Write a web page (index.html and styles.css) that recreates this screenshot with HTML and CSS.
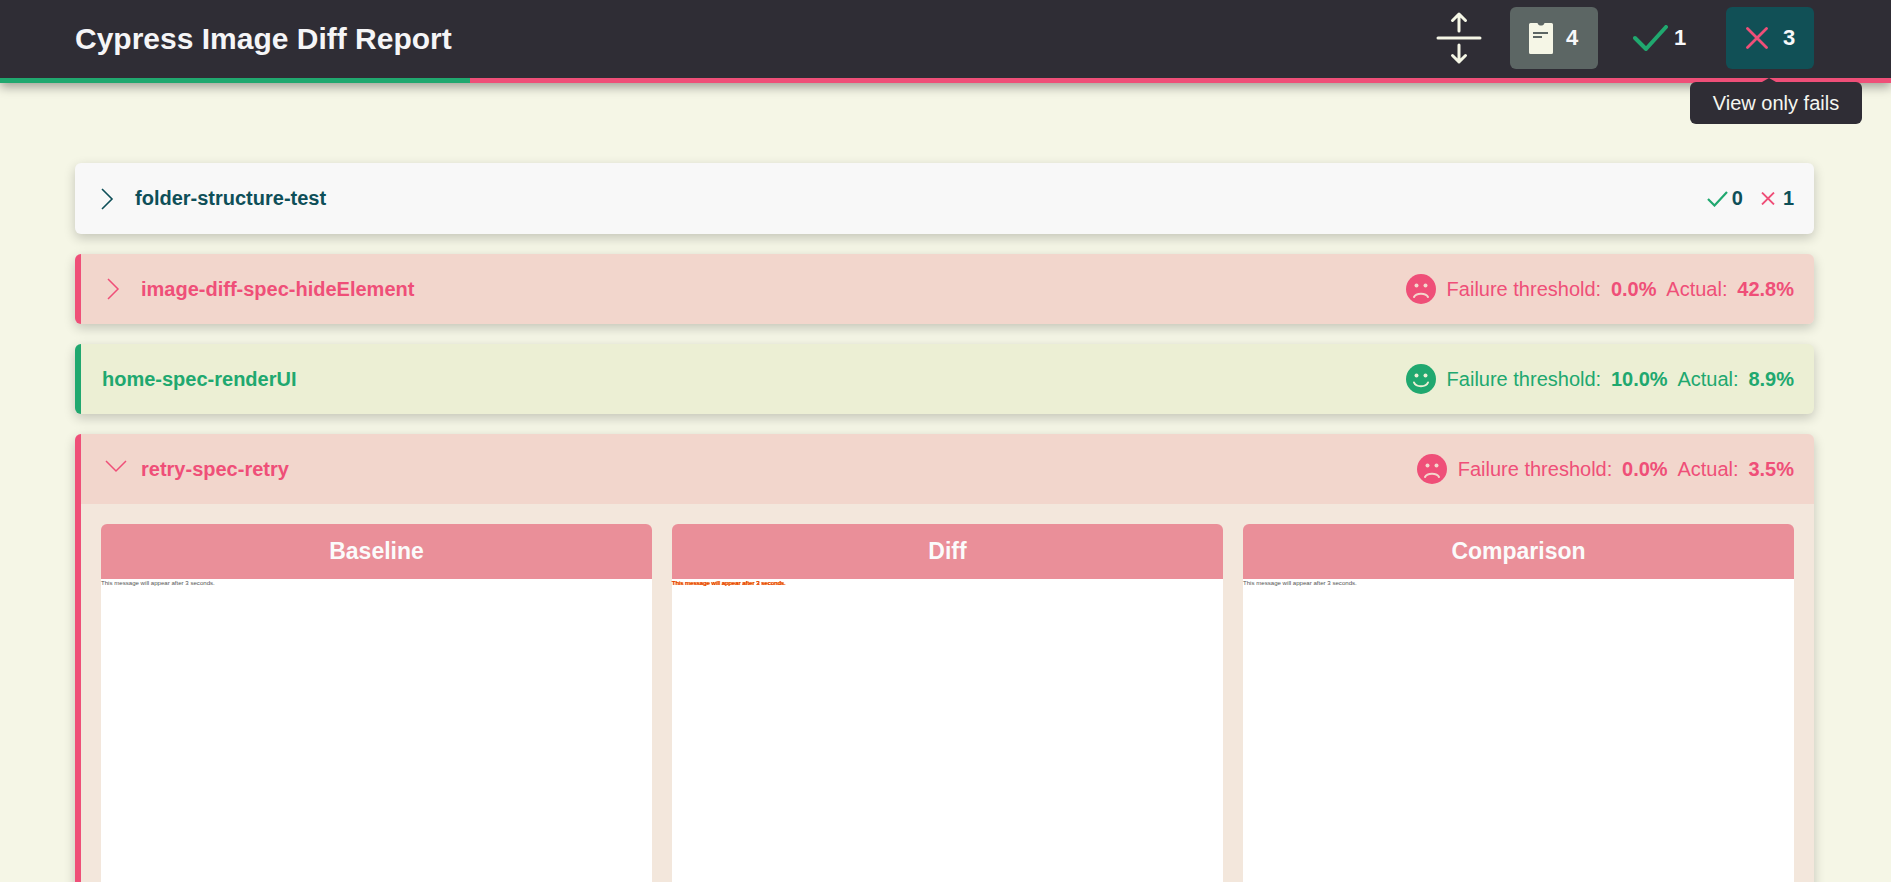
FILE: index.html
```html
<!DOCTYPE html>
<html lang="en">
<head>
<meta charset="utf-8">
<title>Cypress Image Diff Report</title>
<link rel="stylesheet" href="styles.css">
</head>
<body>
<div class="page">
  <header class="topbar">
    <div class="topbar-main">
      <h1 class="title">Cypress Image Diff Report</h1>
      <div class="actions">
        <button class="btn-toggle" type="button" aria-label="Toggle">
          <svg width="62" height="62" viewBox="0 0 62 62" fill="none" stroke="#f5f6e6" stroke-width="3" stroke-linecap="round" stroke-linejoin="round">
            <path d="M10 31H52"/>
            <path d="M31 7V24M24.500 13.500L31 7L37.500 13.500"/>
            <path d="M31 38V55M24.500 48.500L31 55L37.500 48.500"/>
          </svg>
        </button>
        <button class="btn btn-all" type="button">
          <svg width="24" height="31" viewBox="0 0 24 31"><path fill="#f5f6e6" d="M1.500 0H8.500C9 2 10.500 2.500 12 2.500S15 2 15.500 0H22.500A1.500 1.500 0 0 1 24 1.500V29.500A1.500 1.500 0 0 1 22.500 31H1.500A1.500 1.500 0 0 1 0 29.500V1.500A1.500 1.500 0 0 1 1.500 0Z"/><path d="M4 10H19M4 14H13" stroke="#5c6664" stroke-width="1.800"/></svg>
          <span class="btn-count">4</span>
        </button>
        <button class="btn btn-pass" type="button">
          <svg width="35" height="26" viewBox="0 0 35 26" fill="none" stroke="#20a86f" stroke-width="4" stroke-linecap="round" stroke-linejoin="round"><path d="M2 13L13 24L33 2"/></svg>
          <span class="btn-count">1</span>
        </button>
        <button class="btn btn-fail" type="button">
          <svg width="22" height="22" viewBox="0 0 22 22" fill="none" stroke="#ef4f78" stroke-width="2.800" stroke-linecap="round"><path d="M1.500 1.500L20.500 20.500M20.500 1.500L1.500 20.500"/></svg>
          <span class="btn-count">3</span>
        </button>
      </div>
    </div>
    <div class="progress"><div class="progress-pass"></div><div class="progress-fail"></div></div>
    <div class="tooltip">View only fails</div>
  </header>

  <main class="list">
    <section class="card card-folder">
      <div class="card-head">
        <svg class="chev" width="40" height="30" viewBox="0 0 40 30" fill="none" stroke="#0e4f58" stroke-width="1.600"><path d="M7 5L17 15L7 25"/></svg>
        <span class="name">folder-structure-test</span>
        <span class="stats">
          <svg class="stat-check" width="21" height="16" viewBox="0 0 21 16" fill="none" stroke="#20a86f" stroke-width="2.200"><path d="M1 8L7.500 14.500L20 1"/></svg>
          <b class="stat-num">0</b>
          <svg class="stat-x" width="14" height="13" viewBox="0 0 14 13" fill="none" stroke="#ef4f78" stroke-width="1.800"><path d="M1 0.500L13 12.500M13 0.500L1 12.500"/></svg>
          <b class="stat-num">1</b>
        </span>
      </div>
    </section>

    <section class="card card-fail">
      <div class="card-head">
        <svg class="chev" width="40" height="30" viewBox="0 0 40 30" fill="none" stroke="#ef4f78" stroke-width="1.500"><path d="M7 5L17 15L7 25"/></svg>
        <span class="name">image-diff-spec-hideElement</span>
        <span class="result">
          <svg class="face" width="30" height="30" viewBox="0 0 30 30"><circle cx="15" cy="15" r="15" fill="#ef4f78"/><circle cx="10.500" cy="11.500" r="2" fill="#f3d6cc"/><circle cx="19.500" cy="11.500" r="2" fill="#f3d6cc"/><path d="M8 23C10 18.500 20 18.500 22 23" fill="none" stroke="#f3d6cc" stroke-width="2" stroke-linecap="round"/></svg>
          <span class="label">Failure threshold:</span><b class="val">0.0%</b><span class="label">Actual:</span><b class="val val-last">42.8%</b>
        </span>
      </div>
    </section>

    <section class="card card-pass">
      <div class="card-head card-head-plain">
        <span class="name">home-spec-renderUI</span>
        <span class="result">
          <svg class="face" width="30" height="30" viewBox="0 0 30 30"><circle cx="15" cy="15" r="15" fill="#20a86f"/><circle cx="10.500" cy="11.500" r="2" fill="#ecefd4"/><circle cx="19.500" cy="11.500" r="2" fill="#ecefd4"/><path d="M8 18.500C10 23.500 20 23.500 22 18.500" fill="none" stroke="#ecefd4" stroke-width="2" stroke-linecap="round"/></svg>
          <span class="label">Failure threshold:</span><b class="val">10.0%</b><span class="label">Actual:</span><b class="val val-last">8.9%</b>
        </span>
      </div>
    </section>

    <section class="card card-fail">
      <div class="card-head">
        <svg class="chev" width="40" height="30" viewBox="0 0 40 30" fill="none" stroke="#ef4f78" stroke-width="1.500"><path d="M5 7L15 17L25 7"/></svg>
        <span class="name">retry-spec-retry</span>
        <span class="result">
          <svg class="face" width="30" height="30" viewBox="0 0 30 30"><circle cx="15" cy="15" r="15" fill="#ef4f78"/><circle cx="10.500" cy="11.500" r="2" fill="#f3d6cc"/><circle cx="19.500" cy="11.500" r="2" fill="#f3d6cc"/><path d="M8 23C10 18.500 20 18.500 22 23" fill="none" stroke="#f3d6cc" stroke-width="2" stroke-linecap="round"/></svg>
          <span class="label">Failure threshold:</span><b class="val">0.0%</b><span class="label">Actual:</span><b class="val val-last">3.5%</b>
        </span>
      </div>
      <div class="card-body">
        <figure class="shot">
          <figcaption class="shot-title">Baseline</figcaption>
          <div class="shot-img">This message will appear after 3 seconds.</div>
        </figure>
        <figure class="shot">
          <figcaption class="shot-title">Diff</figcaption>
          <div class="shot-img shot-diff">This message will appear after 3 seconds.</div>
        </figure>
        <figure class="shot">
          <figcaption class="shot-title">Comparison</figcaption>
          <div class="shot-img">This message will appear after 3 seconds.</div>
        </figure>
      </div>
    </section>
  </main>
</div>
</body>
</html>
```
FILE: styles.css
```css
* { box-sizing: border-box; }
html, body { margin: 0; padding: 0; }
body {
  background: #f5f6e6;
  font-family: "Liberation Sans", Arial, sans-serif;
  color: #0e4f58;
}
.page { height: 100vh; overflow: hidden; position: relative; }

.topbar {
  position: relative;
  background: #2f2d35;
  box-shadow: 0 4px 10px rgba(0, 0, 0, 0.35);
  z-index: 2;
}
.topbar-main {
  height: 78px;
  display: flex;
  align-items: center;
  justify-content: space-between;
  padding: 0 77px 2px 75px;
}
.title { margin: 2px 0 0; font-size: 30px; font-weight: 700; color: #f5f5f7; }
.actions { display: flex; align-items: center; gap: 20px; }
.btn-toggle {
  width: 62px; height: 62px; padding: 0; border: 0; background: none;
  display: block;
}
.btn-toggle svg { display: block; }
.btn {
  height: 62px; width: 88px;
  display: flex; align-items: center;
  border: 0; border-radius: 6px;
  background: none;
  font-family: inherit;
  color: #f8f8fa;
}
.btn-count { font-size: 22px; font-weight: 700; line-height: 1; }
.btn-all { background: #5c6664; padding: 0 0 0 19px; gap: 13px; }
.btn-pass { padding: 0 0 0 15px; gap: 6px; }
.btn-fail { background: #115056; padding: 0 0 0 20px; gap: 15px; }

.progress { display: flex; height: 5px; }
.progress-pass { width: 470px; background: #20a86f; }
.progress-fail { flex: 1; background: #ef4f78; }

.tooltip {
  position: absolute;
  left: 1690px; top: 82px;
  width: 172px; height: 42px;
  display: flex; align-items: center; justify-content: center;
  background: #2f2d35;
  border-radius: 6px;
  color: #f5f6f0;
  font-size: 20px;
}
.tooltip::before {
  content: "";
  position: absolute;
  left: 72px; top: -4px;
  border-left: 7px solid transparent;
  border-right: 7px solid transparent;
  border-bottom: 4px solid #2f2d35;
}

.list {
  padding: 80px 77px 0 75px;
  display: flex; flex-direction: column; gap: 20px;
}
.card {
  border-radius: 6px;
  box-shadow: 0 4px 12px rgba(0, 0, 0, 0.2);
  overflow: hidden;
  flex: none;
}
.card-head {
  height: 70px;
  padding: 0 20px;
  display: flex; align-items: center;
}
.chev { flex: none; display: block; }
.name { font-size: 20px; font-weight: 700; }
.card-folder { background: #f8f8f8; }
.card-folder .card-head { height: 71px; }
.card-folder .name { color: #0e4f58; }
.stats { margin-left: auto; display: flex; align-items: center; }
.stat-num { font-size: 20px; }
.stat-check { margin-right: 4px; }
.stat-x { margin-left: 18px; margin-right: 8px; }

.card-fail { background: #f3e7dc; border-left: 6px solid #ef4f78; color: #ef4f78; }
.card-fail .card-head { background: #f2d6cc; }
.card-pass { background: #ecefd4; border-left: 6px solid #20a86f; color: #20a86f; }
.card-head-plain { padding-left: 21px; }

.result { margin-left: auto; display: flex; align-items: center; font-size: 20px; }
.face { margin-right: 10.500px; flex: none; }
.label { margin-right: 9.800px; }
.val { margin-right: 9.800px; }
.val-last { margin-right: 0; }

.card-body {
  padding: 20px;
  display: grid; grid-template-columns: repeat(3, 1fr); gap: 20px;
}
.shot { margin: 0; }
.shot-title {
  height: 55px;
  display: flex; align-items: center; justify-content: center;
  background: #ea8f99;
  border-radius: 6px 6px 0 0;
  color: #fbfbfb;
  font-size: 23px; font-weight: 700;
}
.shot-img {
  height: 900px;
  background: #fff;
  color: #555;
  font-size: 6.100px;
  line-height: 8px;
  white-space: nowrap;
}
.shot-diff {
  color: #e02000;
  text-shadow: 0.5px 0 0 #ffd000, -0.4px 0 0 #f00000;
}
```
